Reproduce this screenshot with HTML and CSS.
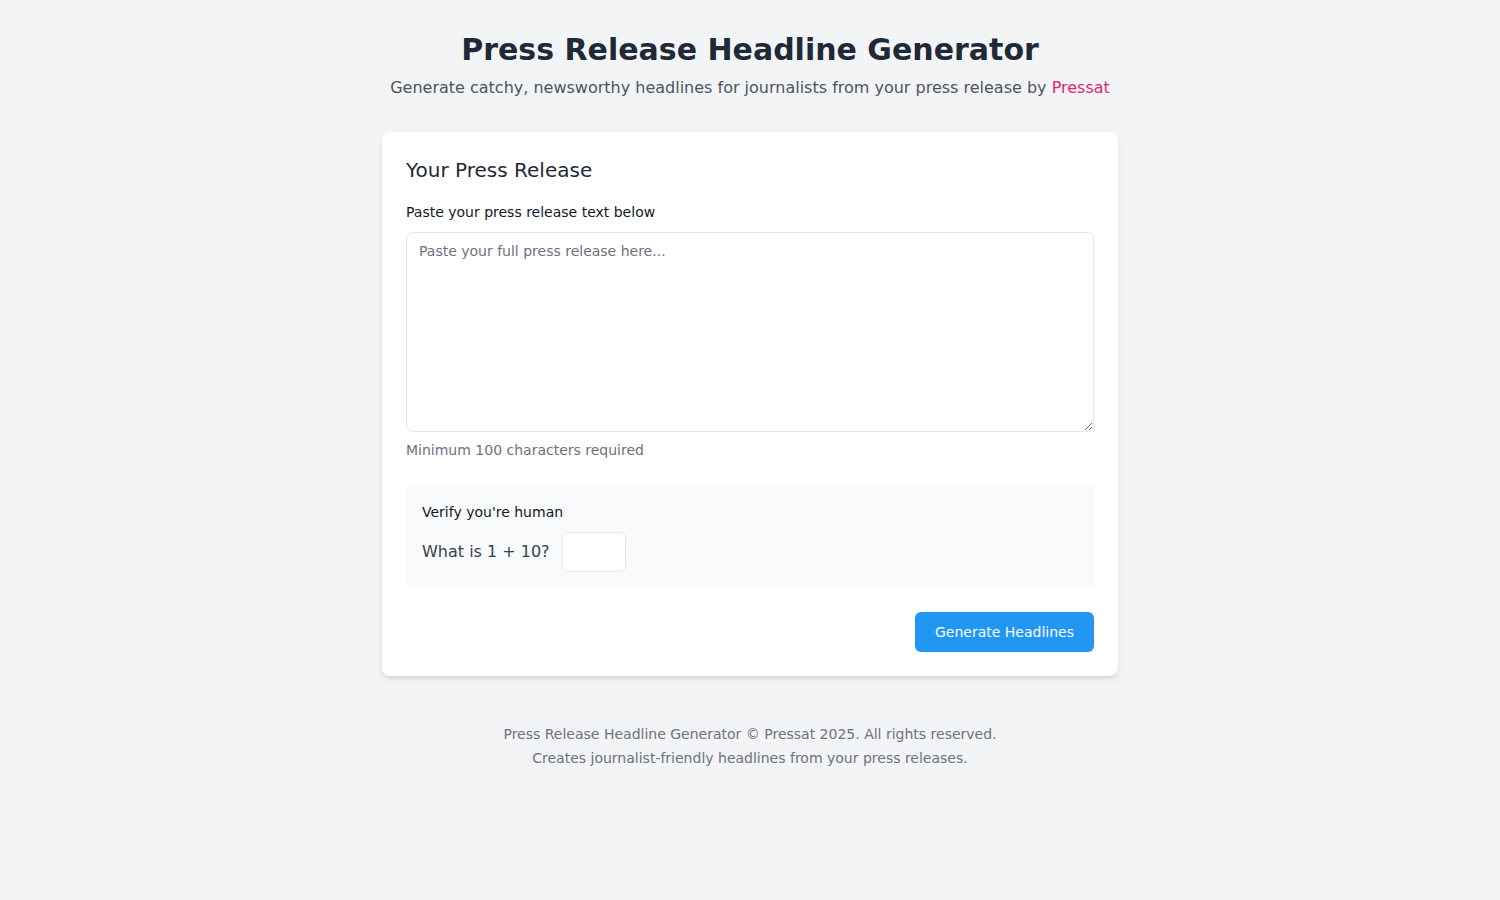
FILE: index.html
```html
<!DOCTYPE html>
<html lang="en">
<head>
<meta charset="utf-8">
<title>Press Release Headline Generator</title>
<link rel="stylesheet" href="styles.css">
</head>
<body>
<div class="container">
  <header class="header">
    <h1 class="title">Press Release Headline Generator</h1>
    <p class="subtitle">Generate catchy, newsworthy headlines for journalists from your press release by <a class="brand" href="#">Pressat</a></p>
  </header>
  <main class="card">
    <h2 class="card-title">Your Press Release</h2>
    <label class="label" for="pr">Paste your press release text below</label>
    <textarea id="pr" class="textarea" placeholder="Paste your full press release here..."></textarea>
    <p class="hint">Minimum 100 characters required</p>
    <div class="captcha">
      <div class="captcha-label">Verify you're human</div>
      <div class="captcha-row">
        <span class="question">What is 1 + 10?</span>
        <input class="answer" type="text">
      </div>
    </div>
    <div class="actions">
      <button class="btn" type="button">Generate Headlines</button>
    </div>
  </main>
  <footer class="footer">
    <p>Press Release Headline Generator © Pressat 2025. All rights reserved.</p>
    <p>Creates journalist-friendly headlines from your press releases.</p>
  </footer>
</div>
</body>
</html>
```
FILE: styles.css
```css
* { box-sizing: border-box; }
html, body { margin: 0; padding: 0; }
body {
  background: #f3f4f6;
  font-family: "DejaVu Sans", sans-serif;
  color: #1f2937;
}
.container {
  max-width: 768px;
  margin: 0 auto;
  padding: 32px 16px;
}
.header { text-align: center; margin-bottom: 32px; }
.title {
  margin: 0 0 8px;
  font-size: 30px;
  line-height: 36px;
  font-weight: 700;
  color: #1f2937;
}
.subtitle {
  margin: 0;
  font-size: 16px;
  line-height: 24px;
  color: #4b5563;
}
.brand { color: #db2777; text-decoration: none; }
.card {
  background: #fff;
  border-radius: 8px;
  box-shadow: 0 4px 6px -1px rgba(0,0,0,0.1), 0 2px 4px -2px rgba(0,0,0,0.1);
  padding: 24px;
}
.card-title {
  margin: 0 0 16px;
  font-size: 20px;
  line-height: 28px;
  font-weight: 400;
  color: #1f2937;
}
.label {
  display: block;
  font-size: 14px;
  line-height: 24px;
  color: #111827;
  margin-bottom: 8px;
}
.textarea {
  display: block;
  width: 100%;
  height: 200px;
  border: 1px solid #e5e7eb;
  border-radius: 6px;
  padding: 8px 12px;
  font-family: "DejaVu Sans", sans-serif;
  font-size: 14px;
  line-height: 20px;
  color: #1f2937;
  resize: vertical;
  outline: none;
}
.textarea::placeholder { color: #6b7280; }
.hint {
  margin: 8px 0 0;
  font-size: 14px;
  line-height: 20px;
  color: #6b7280;
}
.captcha {
  margin-top: 24px;
  background: #f9fafb;
  border-radius: 8px;
  padding: 16px;
}
.captcha-label {
  font-size: 14px;
  line-height: 24px;
  color: #111827;
  margin-bottom: 8px;
}
.captcha-row {
  display: flex;
  align-items: center;
  gap: 12px;
}
.question {
  font-size: 16px;
  line-height: 24px;
  color: #374151;
}
.answer {
  width: 64px;
  height: 40px;
  border: 1px solid #e5e7eb;
  border-radius: 6px;
  background: #fff;
  padding: 0 8px;
  font-family: "DejaVu Sans", sans-serif;
  font-size: 16px;
  outline: none;
}
.actions {
  display: flex;
  justify-content: flex-end;
  margin-top: 24px;
}
.btn {
  height: 40px;
  padding: 0 20px;
  border: none;
  border-radius: 6px;
  background: #2196f3;
  color: #fff;
  font-family: "DejaVu Sans", sans-serif;
  font-size: 14px;
  cursor: pointer;
}
.footer {
  margin-top: 46px;
  text-align: center;
  font-size: 14px;
  line-height: 24px;
  color: #6b7280;
}
.footer p { margin: 0; }
```
